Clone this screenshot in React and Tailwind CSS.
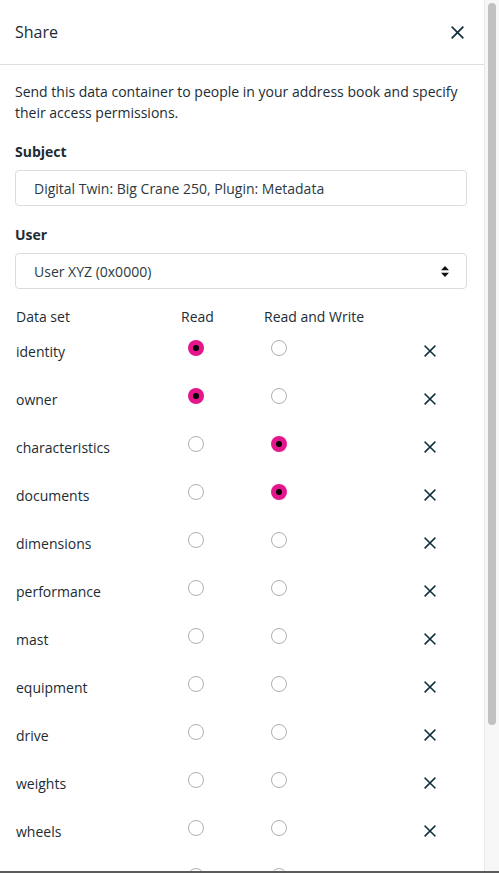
import React from 'react';

const rows = [
    { name: 'identity', access: 'read' },
    { name: 'owner', access: 'read' },
    { name: 'characteristics', access: 'write' },
    { name: 'documents', access: 'write' },
    { name: 'dimensions', access: null },
    { name: 'performance', access: null },
    { name: 'mast', access: null },
    { name: 'equipment', access: null },
    { name: 'drive', access: null },
    { name: 'weights', access: null },
    { name: 'wheels', access: null },
    { name: 'cabin', access: null },
    { name: 'attachments', access: null },
];

const Cross = ({ size = 12 }) => (
    <svg width={size} height={size} viewBox="0 0 12 12" fill="none" stroke="#15303d" strokeWidth="1.6" strokeLinecap="square">
        <path d="M1.2 1.2 L10.8 10.8 M10.8 1.2 L1.2 10.8" />
    </svg>
);

const Radio = ({ checked }) =>
    checked ? (
        <span className="flex h-4 w-4 items-center justify-center rounded-full bg-[#e4168b] mb-[6px]">
            <span className="h-[6px] w-[6px] rounded-full bg-black" />
        </span>
    ) : (
        <span className="block h-4 w-4 rounded-full border border-[#aab1b8] bg-white mb-[6px]" />
    );

const App = () => {
    return (
        <div className="flex h-[873px] w-[499px] flex-col overflow-hidden bg-white text-[#1b2c35] font-['Open_Sans',sans-serif]">
            <div className="flex flex-1 min-h-0">
                <div className="flex w-[485px] flex-col border-r border-[#e8e8e8]">
                    <div className="flex h-[65px] shrink-0 items-center justify-between border-b border-[#dcdfe2] pl-[15px] pr-[20px]">
                        <span className="text-[16px]">Share</span>
                        <Cross size={13} />
                    </div>

                    <div className="pl-[15px] pr-[17px] pt-[16px] text-[14px] leading-[21px]">
                        <p>Send this data container to people in your address book and specify their access permissions.</p>

                        <label className="mt-[18px] block font-bold">Subject</label>
                        <div className="mt-[8px] flex h-[36px] items-center rounded-[4px] border border-[#dcdcdc] pl-[18px] text-[#2b3a42]">
                            Digital Twin: Big Crane 250, Plugin: Metadata
                        </div>

                        <label className="mt-[18px] block font-bold">User</label>
                        <div className="mt-[8px] flex h-[36px] items-center justify-between rounded-[4px] border border-[#dcdcdc] pl-[18px] pr-[17px] text-[#2b3a42]">
                            <span>User XYZ (0x0000)</span>
                            <svg width="8" height="11" viewBox="0 0 8 11" fill="#111">
                                <path d="M4 0 L8 4.3 L0 4.3 Z M0 6.7 L8 6.7 L4 11 Z" />
                            </svg>
                        </div>

                        <div className="mt-[17px] flex h-[21px] items-center">
                            <span className="w-[166px] pl-[1px]">Data set</span>
                            <span className="w-[83px]">Read</span>
                            <span>Read and Write</span>
                        </div>

                        {rows.map((r) => (
                            <div key={r.name} className="flex h-[48px] items-center">
                                <span className="w-[166px] pl-[1px]">{r.name}</span>
                                <span className="w-[83px] pl-[7px]">
                                    <Radio checked={r.access === 'read'} />
                                </span>
                                <span className="w-[160px] pl-[7px]">
                                    <Radio checked={r.access === 'write'} />
                                </span>
                                <span>
                                    <Cross />
                                </span>
                            </div>
                        ))}
                    </div>
                </div>
                <div className="flex-1 bg-[#f7f7f7] px-[3px] pt-[3px]">
                    <div className="h-[722px] w-[8px] rounded-full bg-[#c1c1c1]" />
                </div>
            </div>
            <div className="h-[2px] shrink-0 bg-[#5b5b5b]" />
        </div>
    );
};

export default App;
